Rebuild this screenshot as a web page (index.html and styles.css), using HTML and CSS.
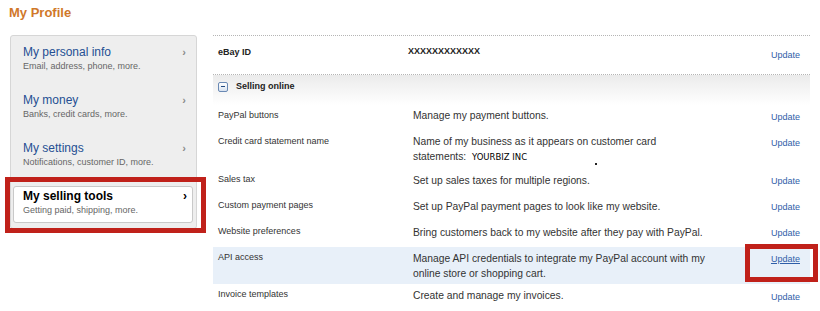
FILE: index.html
```html
<!DOCTYPE html>
<html lang="en">
<head>
  <meta charset="UTF-8" />
  <meta name="viewport" content="width=device-width, initial-scale=1.0"/>
  <title>My Profile</title>
  <link rel="stylesheet" href="styles.css">
</head>
<body>
  <h1>My Profile</h1>

  <div class="layout">
    <ul class="menu">
      <li class="menu-item">
        <a href="#" class="menu-title">My personal info <span class="arrow">&rsaquo;</span></a>
        <p class="menu-sub">Email, address, phone, more.</p>
      </li>
      <li class="menu-item">
        <a href="#" class="menu-title">My money <span class="arrow">&rsaquo;</span></a>
        <p class="menu-sub">Banks, credit cards, more.</p>
      </li>
      <li class="menu-item">
        <a href="#" class="menu-title">My settings <span class="arrow">&rsaquo;</span></a>
        <p class="menu-sub">Notifications, customer ID, more.</p>
      </li>
      <li class="menu-item active">
        <a href="#" class="menu-title">My selling tools <span class="arrow">&rsaquo;</span></a>
        <p class="menu-sub">Getting paid, shipping, more.</p>
      </li>
    </ul>

    <div class="content">
      <div class="id-row">
        <span class="id-label">eBay ID</span>
        <span class="id-value">XXXXXXXXXXXX</span>
        <span class="update"><a href="#">Update</a></span>
      </div>

      <div class="section">
        <span class="collapse"></span>Selling online
      </div>

      <div class="row">
        <span class="label">PayPal buttons</span>
        <span class="desc">Manage my payment buttons.</span>
        <span class="update"><a href="#">Update</a></span>
      </div>
      <div class="row">
        <span class="label">Credit card statement name</span>
        <span class="desc">Name of my business as it appears on customer card statements: &nbsp;<b class="biz">YOURBIZ INC</b><i class="dot"></i></span>
        <span class="update"><a href="#">Update</a></span>
      </div>
      <div class="row">
        <span class="label">Sales tax</span>
        <span class="desc">Set up sales taxes for multiple regions.</span>
        <span class="update"><a href="#">Update</a></span>
      </div>
      <div class="row">
        <span class="label">Custom payment pages</span>
        <span class="desc">Set up PayPal payment pages to look like my website.</span>
        <span class="update"><a href="#">Update</a></span>
      </div>
      <div class="row">
        <span class="label">Website preferences</span>
        <span class="desc">Bring customers back to my website after they pay with PayPal.</span>
        <span class="update"><a href="#">Update</a></span>
      </div>
      <div class="row highlight">
        <span class="label">API access</span>
        <span class="desc">Manage API credentials to integrate my PayPal account with my online store or shopping cart.</span>
        <span class="update"><a href="#" class="marked">Update</a></span>
      </div>
      <div class="row">
        <span class="label">Invoice templates</span>
        <span class="desc">Create and manage my invoices.</span>
        <span class="update"><a href="#">Update</a></span>
      </div>
    </div>
  </div>
</body>
</html>
```

FILE: styles.css
```css
body {
  margin: 0;
  padding: 5px 0 0 9px;
  font-family: "Liberation Sans", Arial, sans-serif;
  color: #333;
  background: #fff;
}
h1 {
  margin: 0;
  font-size: 13px;
  line-height: 16px;
  color: #d0782a;
}
.layout {
  display: flex;
  align-items: flex-start;
  margin-top: 14px;
}

/* menu da esquerda */
.menu {
  list-style: none;
  margin: 0 0 0 1px;
  padding: 0;
  width: 185px;
  background: #eeeeee;
  border: 1px solid #d6d6d6;
  border-radius: 3px;
}
.menu-item {
  padding: 9px 10px 12px 12px;
}
.menu-title {
  display: flex;
  justify-content: space-between;
  font-size: 12px;
  line-height: 15px;
  color: #254f93;
  text-decoration: none;
}
.arrow {
  font-weight: bold;
  font-size: 11px;
  color: #8a8a8a;
}
.menu-sub {
  margin: 0;
  font-size: 9px;
  line-height: 12px;
  color: #666;
}
.menu-item.active {
  position: relative;
  margin: 6px 3px 5px 2px;
  padding: 2px 5px 6px 9px;
  background: #fff;
  border: 1px solid #c9c9c9;
  border-radius: 3px;
}
.menu-item.active .menu-title {
  font-weight: bold;
  color: #000;
}
.menu-item.active .arrow {
  font-size: 12px;
  color: #000;
}
.menu-item.active::after {
  content: "";
  position: absolute;
  top: -10px;
  left: -9px;
  right: -14px;
  bottom: -11px;
  border: 5px solid #c0211a;
}

/* conteudo */
.content {
  margin-left: 16px;
  width: 597px;
  border-top: 1px dotted #b5b5b5;
}
.id-row {
  display: grid;
  grid-template-columns: 195px 300px 1fr;
  height: 38px;
  border-bottom: 1px dotted #b5b5b5;
  font-size: 9px;
  line-height: 15px;
}
.id-label {
  padding: 9px 0 0 5px;
  font-weight: bold;
  color: #222;
}
.id-value {
  padding-top: 8px;
  font-weight: bold;
  color: #222;
}
.id-row .update {
  padding-top: 12px;
}
.section {
  display: flex;
  align-items: center;
  padding: 4px 0 10.5px 5px;
  font-size: 9px;
  line-height: 15px;
  font-weight: bold;
  color: #222;
  background: linear-gradient(#ebebeb, #fff);
}
.collapse {
  position: relative;
  width: 8px;
  height: 8px;
  margin-right: 8px;
  border: 1px solid #6a89b4;
  border-radius: 2px;
  background: linear-gradient(#fff, #d8e2ef);
}
.collapse::before {
  content: "";
  position: absolute;
  left: 2px;
  top: 3.5px;
  width: 4px;
  height: 1px;
  background: #234a80;
}
.row {
  display: grid;
  grid-template-columns: 200px 295px 1fr;
}
.row.highlight {
  background: #e8f0f9;
}
.label {
  padding: 3px 0 8px 5px;
  font-size: 9px;
  line-height: 15px;
}
.desc {
  position: relative;
  padding: 3.6px 0 3.9px;
  font-size: 10.3px;
  line-height: 15px;
  color: #333;
}
.biz {
  font-family: "DejaVu Sans", sans-serif;
  font-weight: normal;
  font-size: 8.5px;
  color: #000;
}
.dot {
  position: absolute;
  left: 182px;
  top: 32px;
  width: 2px;
  height: 2px;
  background: #222;
}
.update {
  padding: 5.3px 10px 0 0;
  text-align: right;
  font-size: 9px;
  line-height: 15px;
}
.update a {
  color: #2f5ea8;
  text-decoration: none;
}
.update a.marked {
  position: relative;
  display: inline-block;
  text-decoration: underline;
}
.update a.marked::after {
  content: "";
  position: absolute;
  top: -8px;
  left: -26px;
  right: -18px;
  bottom: -15px;
  border: 5px solid #c0211a;
}
```
